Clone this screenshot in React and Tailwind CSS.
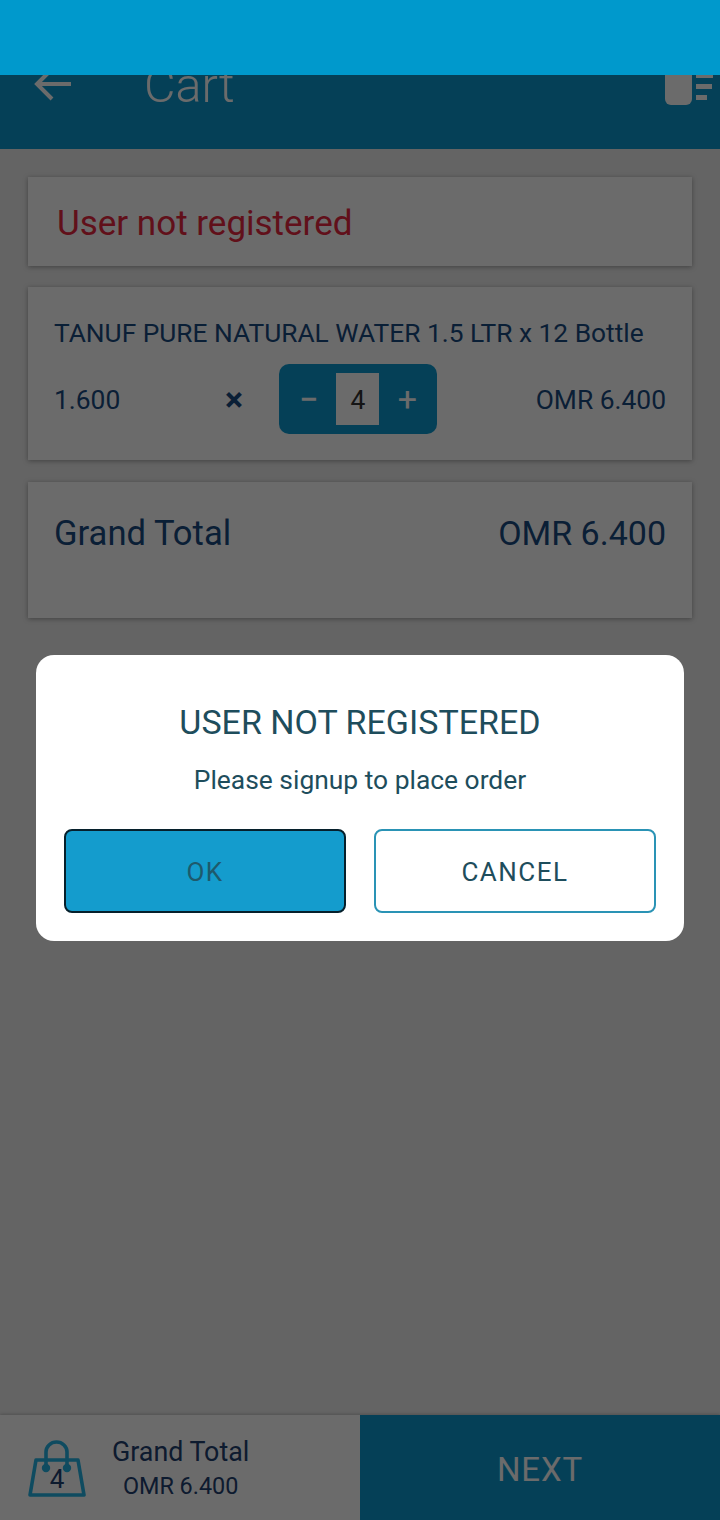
const FONT = { fontFamily: 'Roboto, "Noto Sans", sans-serif' };

function BagIcon() {
  return (
    <svg width="58" height="60" viewBox="0 0 58 60" fill="none" stroke="#25b4e4" strokeWidth="3.6" strokeLinejoin="round" strokeLinecap="round">
      <path d="M8 20 H50 L56 55 H2 Z" />
      <path d="M18 27 V12 a10.5 10 0 0 1 21 0 V27" />
      <circle cx="18" cy="28" r="2.4" fill="#25b4e4" />
      <circle cx="39" cy="28" r="2.4" fill="#25b4e4" />
    </svg>
  );
}

function ClearCartIcon() {
  return (
    <svg width="56" height="46" viewBox="0 0 56 46" fill="#ffffff">
      <path d="M1 0 H28 V39 a6 6 0 0 1 -6 6 H7 a6 6 0 0 1 -6 -6 Z" />
      <rect x="32" y="13" width="17" height="5" />
      <rect x="32" y="24" width="16" height="5" />
      <rect x="32" y="35" width="11" height="5" />
    </svg>
  );
}

function Card({ className, children }) {
  return <div className={`bg-white shadow-[0_1px_5px_rgba(0,0,0,0.35)] ${className}`}>{children}</div>;
}

export default function App() {
  return (
    <div style={FONT} className="relative w-[720px] h-[1520px] overflow-hidden bg-[#eeeeee] flex flex-col">
      {/* page under the dialog */}
      <header className="h-[149px] shrink-0 bg-[#0c99d0] text-white flex items-start pt-[54px] pl-[34px]">
        <svg width="38" height="34" viewBox="0 0 38 34" fill="none" stroke="#ffffff" strokeWidth="4" className="mt-[13px]">
          <path d="M37 17 H4 M18 2 L3 17 L18 32" />
        </svg>
        <h1 className="ml-[72px] text-[48.5px] leading-[64px] font-light">Cart</h1>
        <div className="ml-auto mt-[6px]">
          <ClearCartIcon />
        </div>
      </header>

      <main className="flex-1 px-7 pt-7 flex flex-col">
        <Card className="h-[89px] pl-[29px] flex items-center">
          <p className="text-[35px] pt-[5px] text-[#e8283f]">User not registered</p>
        </Card>

        <Card className="mt-[21px] h-[173px] pl-[26px] pr-[26px] pt-[28px] text-[#1a4a80]">
          <p className="text-[26.3px] leading-9 whitespace-nowrap">TANUF PURE NATURAL WATER 1.5 LTR x 12 Bottle</p>
          <div className="mt-[13px] flex items-center text-[26.4px]">
            <span className="w-[171px] pt-1">1.600</span>
            <span className="w-[54px] text-[34px] font-bold leading-none">×</span>
            <div className="w-[158px] h-[70px] rounded-[10px] bg-[#0c99d0] flex items-center justify-between px-[20px] text-white">
              <span className="text-[34px] font-medium">−</span>
              <span className="w-[43px] h-[52px] pt-1 bg-white flex items-center justify-center text-[#333333]">4</span>
              <span className="text-[34px]">+</span>
            </div>
            <span className="ml-auto pt-1">OMR 6.400</span>
          </div>
        </Card>

        <Card className="mt-[22px] h-[136px] pl-[26px] pr-[26px] pt-[28px] flex justify-between leading-[46px] text-[#1a4a80]">
          <span className="text-[34.6px]">Grand Total</span>
          <span className="text-[34px]">OMR 6.400</span>
        </Card>
      </main>

      <footer className="h-[105px] shrink-0 flex shadow-[0_-1px_3px_rgba(0,0,0,0.2)]">
        <div className="w-1/2 bg-white flex items-center pl-7">
          <div className="relative w-[58px] h-[60px] mt-[4px]">
            <BagIcon />
            <span className="absolute left-0 right-0 top-[23px] text-center text-[26px] leading-8 text-[#1f4070]">4</span>
          </div>
          <div className="ml-[26px] pt-[3px] text-center text-[#1f4070]">
            <p className="text-[26.8px] leading-[34px]">Grand Total</p>
            <p className="text-[23.4px] leading-[34px]">OMR 6.400</p>
          </div>
        </div>
        <div className="w-1/2 bg-[#0c99d0] text-white flex items-center justify-center pt-1 text-[33px] tracking-wide">NEXT</div>
      </footer>

      {/* dim layer and dialog */}
      <div className="absolute inset-0 bg-black/[0.58] pt-[655px] px-9">
        <div className="h-[286px] rounded-[18px] bg-white px-7 pt-[47px] text-center text-[#1e4d5c]">
          <h2 className="text-[34px] leading-10">USER NOT REGISTERED</h2>
          <p className="mt-[18px] text-[26.4px] leading-[40px]">Please signup to place order</p>
          <div className="mt-[29px] flex gap-7 text-[26px] tracking-[1.5px]">
            <button className="flex-1 h-[84px] pt-[2px] rounded-lg border-2 border-[#06202c] bg-[#149ccd] text-[#1e5a6c]">OK</button>
            <button className="flex-1 h-[84px] pt-[2px] rounded-lg border-2 border-[#2a93b5] bg-white text-[#1e4d5c]">CANCEL</button>
          </div>
        </div>
      </div>

      {/* system status bar sits above everything */}
      <div className="absolute top-0 left-0 right-0 h-[75px] bg-[#0099cc]" />
    </div>
  );
}
